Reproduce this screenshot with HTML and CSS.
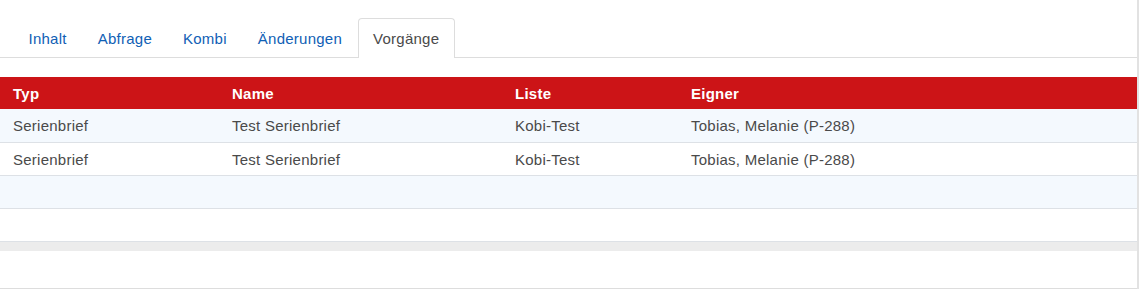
FILE: index.html
```html
<!DOCTYPE html>
<html lang="de">
<head>
    <meta charset="UTF-8">
    <meta name="viewport" content="width=device-width, initial-scale=1.0">
    <title>Vorgänge</title>
    <link rel="stylesheet" href="styles.css">
</head>
<body>
    <div class="panel">
        <ul class="tabs">
            <li><a href="#">Inhalt</a></li>
            <li><a href="#">Abfrage</a></li>
            <li><a href="#">Kombi</a></li>
            <li><a href="#">Änderungen</a></li>
            <li class="active"><a href="#">Vorgänge</a></li>
        </ul>

        <table class="grid">
            <colgroup>
                <col class="col-typ">
                <col class="col-name">
                <col class="col-liste">
                <col>
            </colgroup>
            <thead>
                <tr>
                    <th>Typ</th>
                    <th>Name</th>
                    <th>Liste</th>
                    <th>Eigner</th>
                </tr>
            </thead>
            <tbody>
                <tr>
                    <td>Serienbrief</td>
                    <td>Test Serienbrief</td>
                    <td>Kobi-Test</td>
                    <td>Tobias, Melanie (P-288)</td>
                </tr>
                <tr>
                    <td>Serienbrief</td>
                    <td>Test Serienbrief</td>
                    <td>Kobi-Test</td>
                    <td>Tobias, Melanie (P-288)</td>
                </tr>
                <tr class="empty"><td colspan="4"></td></tr>
                <tr class="empty"><td colspan="4"></td></tr>
            </tbody>
        </table>

        <div class="scrollbar"></div>
        <div class="footer"></div>
    </div>
</body>
</html>
```

FILE: styles.css
```css
body {
    margin: 0;
    font-family: 'Liberation Sans', Arial, sans-serif;
    font-size: 15px;
    letter-spacing: 0.25px;
    color: #4a4a4a;
    background: #fff;
}
.panel {
    width: 1137px;
    height: 289px;
    border-right: 2px solid #e2e2e2;
}

/* tabs */
.tabs {
    display: flex;
    list-style: none;
    margin: 0 0 19px 0;
    padding: 18px 0 0 13px;
    border-bottom: 1px solid #dddddd;
}
.tabs li {
    margin-bottom: -1px;
}
.tabs a {
    display: block;
    height: 39px;
    line-height: 39px;
    padding: 0 14.5px;
    border: 1px solid transparent;
    border-bottom: none;
    border-radius: 4px 4px 0 0;
    color: #1060b5;
    text-decoration: none;
}
.tabs .active a {
    color: #4a4a4a;
    background: #fff;
    border-color: #dddddd;
}

/* table */
.grid {
    width: 100%;
    border-collapse: collapse;
    table-layout: fixed;
}
.col-typ { width: 219px; }
.col-name { width: 283px; }
.col-liste { width: 176px; }
.grid th {
    height: 32px;
    padding: 0 13px;
    background: #cc1417;
    color: #fff;
    font-weight: bold;
    text-align: left;
}
.grid td {
    height: 32px;
    padding: 0 13px;
    border-bottom: 1px solid #dde1e6;
    white-space: nowrap;
}
.grid tbody tr:first-child td {
    height: 33px;
}
.grid tbody tr:nth-child(odd) {
    background: #f4f9fe;
}
.scrollbar {
    height: 9px;
    background: #ececec;
}
.footer {
    height: 37px;
    border-bottom: 1px solid #dddddd;
}
```
